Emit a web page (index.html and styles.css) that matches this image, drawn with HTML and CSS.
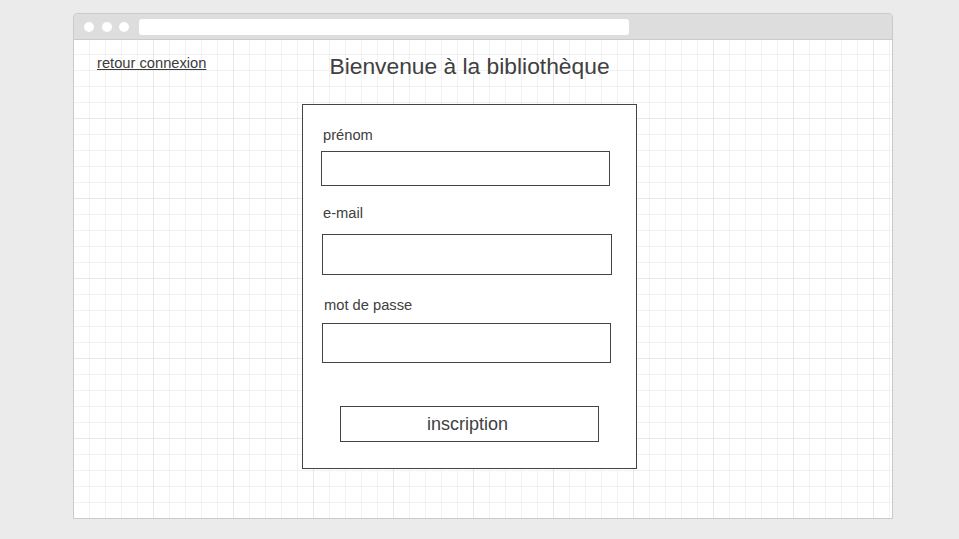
FILE: index.html
```html
<!DOCTYPE html>
<html lang="fr">
<head>
<meta charset="utf-8">
<title>Inscription</title>
<link rel="stylesheet" href="styles.css">
</head>
<body>
<div class="frame">
  <div class="chrome">
    <span class="dot"></span><span class="dot"></span><span class="dot"></span>
    <div class="url"></div>
  </div>
  <div class="viewport">
    <a class="back" href="#">retour connexion</a>
    <main class="main">
      <h1 class="title">Bienvenue à la bibliothèque</h1>
      <form class="card">
        <label class="label label-1">prénom</label>
        <input class="field field-1" type="text">
        <label class="label label-2">e-mail</label>
        <input class="field field-2" type="text">
        <label class="label label-3">mot de passe</label>
        <input class="field field-3" type="password">
        <button class="submit" type="button">inscription</button>
      </form>
    </main>
  </div>
</div>
</body>
</html>
```
FILE: styles.css
```css
* { box-sizing: border-box; }
html, body { margin: 0; padding: 0; }
body {
  background: #ebebeb;
  font-family: "Liberation Sans", Arial, sans-serif;
  color: #404040;
  width: 959px;
  height: 539px;
  overflow: hidden;
}
.frame {
  margin: 13px 0 0 73px;
  width: 820px;
  border: 1px solid #cacaca;
  border-radius: 4px 4px 0 0;
  overflow: hidden;
}
.chrome {
  height: 26px;
  background: #dddddd;
  border-bottom: 1px solid #cacaca;
  display: flex;
  align-items: center;
  padding-left: 10px;
  gap: 7.5px;
}
.dot {
  width: 10px;
  height: 10px;
  border-radius: 50%;
  background: #fff;
  flex: none;
}
.url {
  margin-left: 2.5px;
  width: 490px;
  height: 16px;
  background: #fff;
  border-radius: 3px;
  margin-top: 1px;
}
.viewport {
  height: 478px;
  background-color: #fff;
  background-image:
    linear-gradient(to right, #e8e8e8 1px, transparent 1px),
    linear-gradient(to bottom, #e8e8e8 1px, transparent 1px),
    linear-gradient(to right, #f1f1f1 1px, transparent 1px),
    linear-gradient(to bottom, #f1f1f1 1px, transparent 1px);
  background-size: 80px 80px, 80px 80px, 16px 16px, 16px 16px;
  background-position: -1px -2px, -1px -2px, -1px -2px, -1px -2px;
  display: flex;
  align-items: flex-start;
  padding: 13px 0 0 23px;
}
.back {
  margin-top: 2px;
  width: 205px;
  font-size: 14.7px;
  line-height: 17px;
  color: #3c3c3c;
  text-decoration: underline;
  flex: none;
}
.main {
  width: 335px;
  display: flex;
  flex-direction: column;
  align-items: center;
}
.title {
  margin: 0;
  font-weight: normal;
  font-size: 22.8px;
  line-height: 26px;
  color: #404040;
  white-space: nowrap;
}
.card {
  margin: 25px 0 0 0;
  width: 335px;
  height: 365px;
  border: 1px solid #444;
  background: #fff;
  display: flex;
  flex-direction: column;
  align-items: flex-start;
}
.label {
  font-size: 14.7px;
  line-height: 17px;
  color: #404040;
  margin-left: 20px;
}
.label-1 { margin-top: 22px; }
.label-2 { margin-top: 19px; }
.label-3 { margin-top: 22px; margin-left: 21px; }
.field {
  display: block;
  margin: 0;
  padding: 0;
  border: 1px solid #444;
  border-radius: 0;
  background: #fff;
  outline: none;
  -webkit-appearance: none;
  appearance: none;
}
.field-1 { margin: 7px 0 0 18px; width: 289px; height: 35px; }
.field-2 { margin: 12px 0 0 19px; width: 290px; height: 41px; }
.field-3 { margin: 9px 0 0 19px; width: 289px; height: 40px; }
.submit {
  margin: 43px 0 0 37px;
  width: 259px;
  height: 36px;
  padding: 1px 4px 0 0;
  border: 1px solid #444;
  border-radius: 0;
  background: #fff;
  font-family: "Liberation Sans", Arial, sans-serif;
  font-size: 18px;
  line-height: 21px;
  color: #404040;
  -webkit-appearance: none;
  appearance: none;
}
```
